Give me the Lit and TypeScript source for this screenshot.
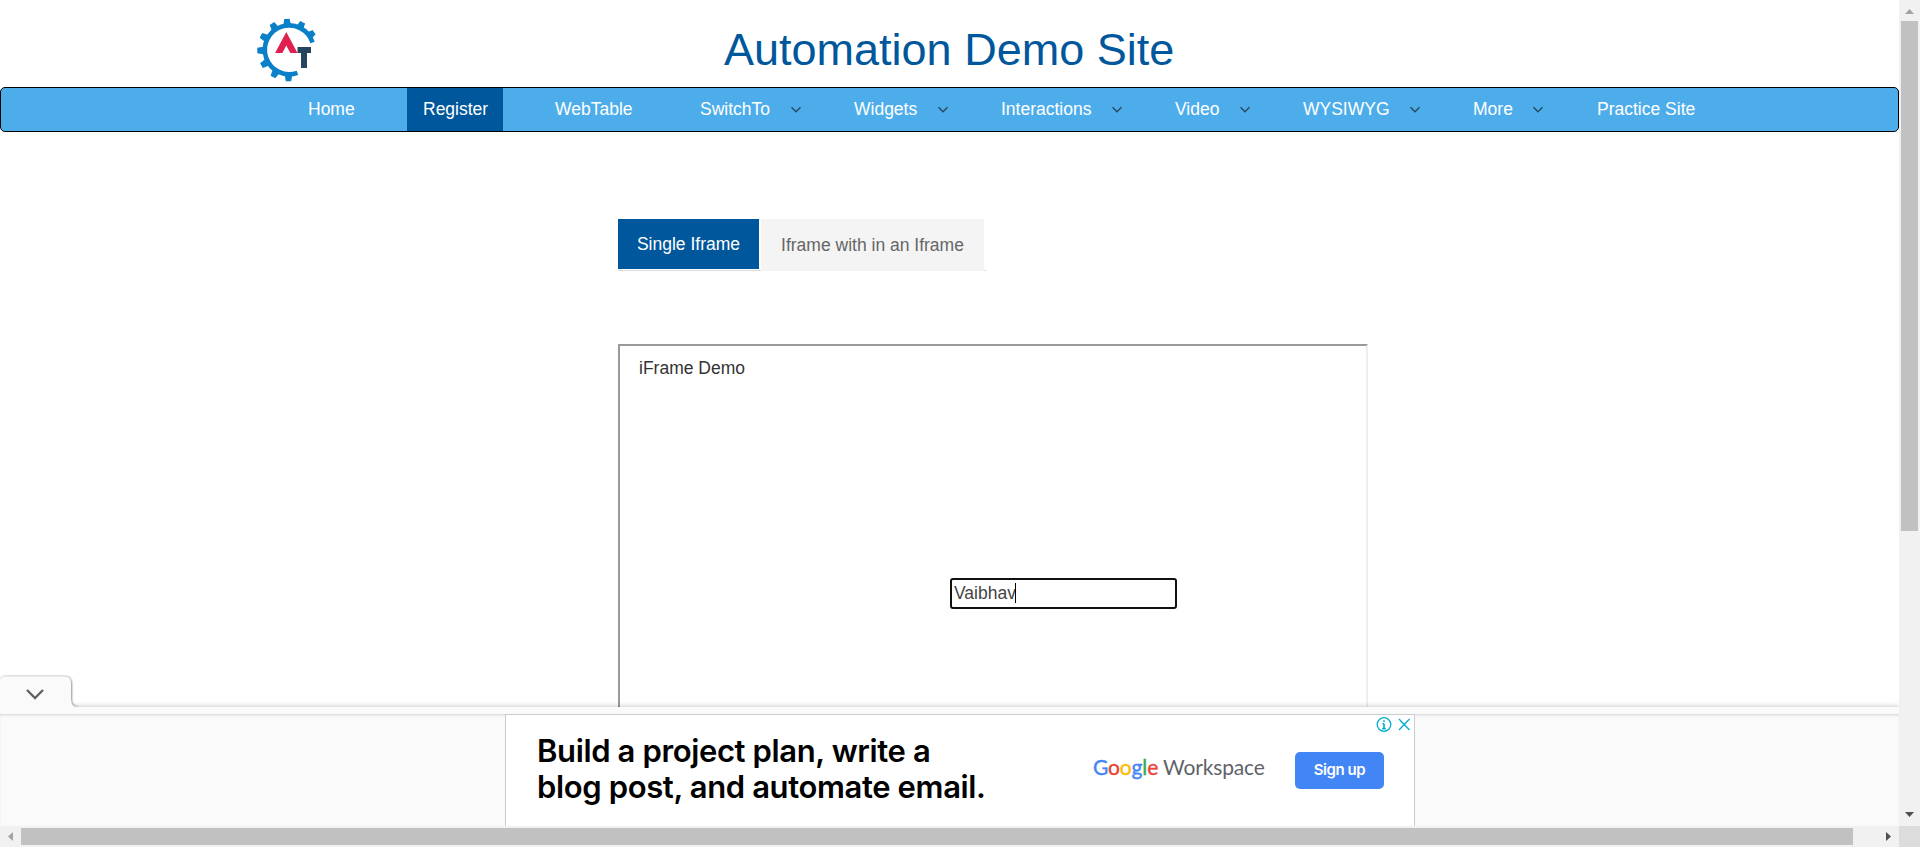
import { LitElement, html, css, svg } from "lit";
import { customElement } from "lit/decorators.js";

interface NavItem { label: string; menu?: boolean; active?: boolean }

const NAV: NavItem[] = [
  { label: "Home" },
  { label: "Register", active: true },
  { label: "WebTable" },
  { label: "SwitchTo", menu: true },
  { label: "Widgets", menu: true },
  { label: "Interactions", menu: true },
  { label: "Video", menu: true },
  { label: "WYSIWYG", menu: true },
  { label: "More", menu: true },
  { label: "Practice Site" },
];

// Gear teeth, in degrees clockwise from the top.
const TEETH = [-3, 27, 55, -32, -62, -91, -120, -150, 180];

@customElement("site-header")
class SiteHeader extends LitElement {
  static styles = css`
    :host { display: block; }
    .top { display: grid; grid-template-columns: 257px 467px 1fr; height: 87px; }
    .logo { grid-column: 2; width: 60px; height: 64px; margin-top: 18px; }
    .title { margin: 0; font-weight: 400; font-size: 45px; line-height: 50px; padding-top: 25px; color: #00579c; white-space: nowrap; }
    .nav { box-sizing: border-box; height: 45px; border: 1px solid #000; border-radius: 5px; background: #4dadeb; padding-left: 291px;
      display: grid; grid-template-columns: 115px 132px 145px 154px 147px 174px 128px 170px 124px auto; justify-content: start; }
    .item { justify-self: start; display: flex; align-items: center; gap: 19.5px; padding: 0 16px; color: #fff; font-size: 17.5px; white-space: nowrap; }
    .label { position: relative; top: -0.5px; }
    .active { background: #00579c; padding-right: 15px; }
    .chev { width: 12px; height: 8px; }
  `;
  render() {
    return html`
      <div class="top">
        <svg class="logo" viewBox="257 18 60 64">
          <path d="M312.500 42.500A24.400 24.400 0 1 0 297.500 72.800" fill="none" stroke="#0a80c8" stroke-width="4.600"/>
          ${TEETH.map(a => svg`<path transform="rotate(${a} 288.500 50)" d="M285.800 18.800h5.400l1.300 7.400h-8z" fill="#0a80c8"/>`)}
          <path d="M286.300 32 297.500 53h-7.200l-4-7.500-4 7.500h-7.200z" fill="#e0204f"/>
          <path d="M297.500 47h13.500v6h-4v15h-6V53h-3.500z" fill="#24445f"/>
        </svg>
        <h1 class="title">Automation Demo Site</h1>
      </div>
      <nav class="nav">
        ${NAV.map(n => html`<a class="item ${n.active ? "active" : ""}"><span class="label">${n.label}</span>${n.menu
          ? html`<svg class="chev" viewBox="0 0 12 8"><path d="M1.500 1.200 6 5.700l4.500-4.500" fill="none" stroke="#28495f" stroke-width="1.400"/></svg>` : ""}</a>`)}
      </nav>`;
  }
}

@customElement("frame-panel")
class FramePanel extends LitElement {
  static styles = css`
    :host { display: flex; flex-direction: column; align-items: flex-start; padding: 87px 0 0 618px; font-size: 17.5px; }
    .tabs { display: flex; align-items: flex-start; box-sizing: border-box; width: 368px; height: 52px; border-bottom: 1px solid #ddd; }
    .tab { display: flex; justify-content: center; align-items: center; white-space: nowrap; }
    .on { width: 141px; height: 50px; margin-right: 2px; background: #00579c; color: #fff; }
    .off { width: 223px; height: 52px; background: #f4f4f4; color: #666; }
    .frame { box-sizing: border-box; width: 750px; height: 500px; margin-top: 73px; border: 2px solid; border-color: #9a9a9a #eee #eee #9a9a9a; flex: none; }
    .heading { padding: 10px 0 0 19px; line-height: 25px; color: #333; }
    .field { box-sizing: border-box; width: 227px; height: 31px; margin: 197px 0 0 330px; border: 2px solid #101010; border-radius: 3px; display: flex; align-items: center; padding: 0 0 1px 2px; color: #444; }
    .caret { width: 1px; height: 20px; margin-left: -1px; background: #000; }
  `;
  render() {
    return html`
      <div class="tabs"><div class="tab on">Single Iframe</div><div class="tab off">Iframe with in an Iframe</div></div>
      <div class="frame">
        <div class="heading">iFrame Demo</div>
        <div class="field"><span class="value">Vaibhav</span><span class="caret"></span></div>
      </div>`;
  }
}

@customElement("ad-banner")
class AdBanner extends LitElement {
  static styles = css`
    :host { display: block; height: 151px; }
    .toggle { position: relative; z-index: 1; width: 90px; height: 32px; display: block; }
    .edge { height: 7px; background: #fafafa; box-shadow: 0 -1px 5px rgba(0,0,0,.2); position: relative; }
    .strip { height: 112px; background: #fafafa; box-shadow: inset 0 2px 3px -1px rgba(0,0,0,.16); display: flex; padding-left: 505px; position: relative; }
    .ad { position: relative; box-sizing: border-box; width: 910px; height: 112px; border: 1px solid #ccc; border-bottom: 0; background: #fff; display: flex; align-items: flex-start; }
    .copy { width: 556px; padding: 18px 0 0 31px; box-sizing: border-box; font: 600 31px/36px "Google Sans", "Product Sans", "Inter", sans-serif; color: #000; white-space: nowrap; }
    .line { display: block; letter-spacing: -0.37px; }
    .brand { width: 233px; padding: 38px 0 0 31px; box-sizing: border-box; font: 400 21px/28px "Lato", sans-serif; letter-spacing: -.15px; white-space: nowrap; color: #5f6368; }
    .b, .r, .y, .g { -webkit-text-stroke: .4px currentColor; }
    .b { color: #4285f4; } .r { color: #ea4335; } .y { color: #fbbc04; } .g { color: #34a853; }
    .cta { width: 89px; height: 37px; margin-top: 37px; border-radius: 5px; background: #4285f4; color: #fff; font: 600 15px/36px "Inter", sans-serif; letter-spacing: -.45px; text-align: center; }
    .choices { position: absolute; right: 3px; top: 1px; width: 36px; height: 17px; }
  `;
  render() {
    return html`
      <svg class="toggle" viewBox="0 0 90 32">
        <defs><filter id="s" x="-20%" y="-30%" width="150%" height="160%"><feDropShadow dx="0.500" dy="0" stdDeviation="1" flood-opacity=".6"/></filter></defs>
        <path d="M0 5.500Q1 1.500 6 1.500H64Q71 1.500 71 8.500V25Q71 32 77 32V38H0Z" fill="#fafafa" filter="url(#s)"/>
        <path d="M27 15l8 8 8-8" fill="none" stroke="#616161" stroke-width="2.300"/>
      </svg>
      <div class="edge"></div>
      <div class="strip">
        <div class="ad">
          <div class="copy"><span class="line">Build a project plan, write a</span><span class="line">blog post, and automate email.</span></div>
          <div class="brand"><span class="b">G</span><span class="r">o</span><span class="y">o</span><span class="b">g</span><span class="g">l</span><span class="r">e</span> <span class="ws">Workspace</span></div>
          <div class="cta">Sign up</div>
          <svg class="choices" viewBox="0 0 36 17" fill="none" stroke="#00aecd" stroke-width="1.300">
            <circle cx="9" cy="8.500" r="6.800"/><path d="M9 4.200v1.900M9 7.500v5.300M7.500 7.800h1.500M7.200 12.600h3.600" stroke-width="1.600"/><path d="M24 3 34.500 14M34.500 3 24 14"/>
          </svg>
        </div>
      </div>`;
  }
}

@customElement("app-root")
class AppRoot extends LitElement {
  static styles = css`
    :host { display: grid; grid-template: 826px 21px / 1899px 21px; width: 1920px; height: 847px; overflow: hidden; background: #fff; font-family: "Liberation Sans", Arial, sans-serif; }
    .page { position: relative; overflow: hidden; }
    .dock { position: absolute; left: 0; right: 0; bottom: 0; }
    .bar { background: #f1f1f1; display: flex; }
    .v { flex-direction: column; justify-content: space-between; }
    .h { justify-content: space-between; }
    .thumb { background: #c1c1c1; }
    .v .thumb { width: 17px; height: 510px; margin: 0 0 auto 2px; }
    .h .thumb { width: 1832px; height: 17px; margin: 2px auto 0 0; }
    .corner { background: #dcdcdc; }
    .arrow { width: 21px; height: 21px; flex: none; }
  `;
  render() {
    return html`
      <main class="page"><site-header></site-header><frame-panel></frame-panel><ad-banner class="dock"></ad-banner></main>
      <div class="bar v">
        <svg class="arrow" viewBox="0 0 21 21"><path d="M6 14h9l-4.500-5z" fill="#a3a3a3"/></svg>
        <div class="thumb"></div>
        <svg class="arrow" viewBox="0 0 21 21"><path d="M6 7h9l-4.500 5z" fill="#505050"/></svg>
      </div>
      <div class="bar h">
        <svg class="arrow" viewBox="0 0 21 21"><path d="M13 6v9l-5-4.500z" fill="#a3a3a3"/></svg>
        <div class="thumb"></div>
        <svg class="arrow" viewBox="0 0 21 21"><path d="M8 6v9l5-4.500z" fill="#505050"/></svg>
      </div>
      <div class="corner"></div>`;
  }
}
